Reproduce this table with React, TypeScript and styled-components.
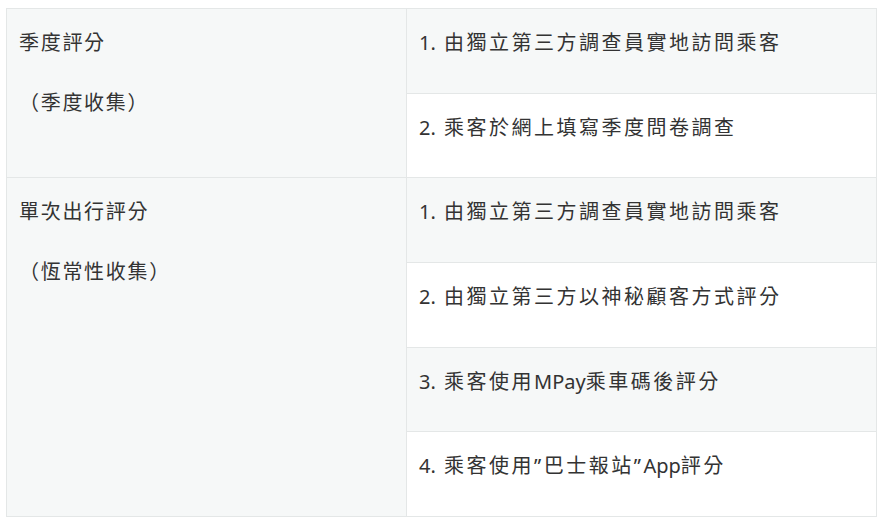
import type { FC } from "react"
import styled, { createGlobalStyle } from "styled-components"

const GlobalStyle = createGlobalStyle`
  body {
    margin: 0;
    background-color: rgb(255, 255, 255);
    font-family: "Noto Sans", "Noto Sans CJK TC", sans-serif;
    color: rgb(51, 51, 51);
  }
`

const Page = styled.div`
  padding: 8px 5px 0 6px;
`

const Table = styled.table`
  width: 870px;
  border-collapse: collapse;
  border: 1px solid rgb(228, 231, 231);
  table-layout: fixed;
`

const Row = styled.tr`
  height: 84.67px;
  &:nth-child(odd) > td {
    background-color: rgb(246, 248, 248);
  }
  &:nth-child(even) > td {
    background-color: rgb(255, 255, 255);
  }
`

const Cell = styled.td`
  border: 1px solid rgb(228, 231, 231);
  vertical-align: top;
  padding: 18px 12px 0 12px;
  font-size: 20px;
  line-height: 32px;
`

const Paragraph = styled.p`
  margin: 0 0 28px 0;
  white-space: nowrap;
`

// CJK runs get the wide tracking, latin runs stay tight
const Cjk = styled.span<{ $track: number }>`
  letter-spacing: ${(p) => p.$track}px;
`

const Latin = styled.span`
  word-spacing: 3px;
`

const CJK_RUN = /[\u3000-\u9fff\uff00-\uffef”]+|[^\u3000-\u9fff\uff00-\uffef”]+/g
const IS_CJK = /[\u3000-\u9fff\uff00-\uffef”]/

const Spaced: FC<{ text: string; track: number }> = ({ text, track }) => {
  const runs = text.match(CJK_RUN) ?? []
  return (
    <>
      {runs.map((r, i) =>
        IS_CJK.test(r) ? (
          <Cjk key={i} $track={track}>
            {r}
          </Cjk>
        ) : (
          <Latin key={i}>{r}</Latin>
        )
      )}
    </>
  )
}

type Group = { title: string; note: string; items: string[] }

const groups: Group[] = [
  {
    title: "季度評分",
    note: "（季度收集）",
    items: ["1. 由獨立第三方調查員實地訪問乘客", "2. 乘客於網上填寫季度問卷調查"],
  },
  {
    title: "單次出行評分",
    note: "（恆常性收集）",
    items: [
      "1. 由獨立第三方調查員實地訪問乘客",
      "2. 由獨立第三方以神秘顧客方式評分",
      "3. 乘客使用MPay乘車碼後評分",
      "4. 乘客使用”巴士報站”App評分",
    ],
  },
]

const App: FC = () => {
  return (
    <Page>
      <GlobalStyle />
      <Table>
        <colgroup>
          <col style={{ width: 400 }} />
          <col style={{ width: 470 }} />
        </colgroup>
        <tbody>
          {groups.flatMap((g) =>
            g.items.map((item, i) => (
              <Row key={g.title + i}>
                {i === 0 && (
                  <Cell rowSpan={g.items.length}>
                    <Paragraph>
                      <Spaced text={g.title} track={1.7} />
                    </Paragraph>
                    <Paragraph>
                      <Spaced text={g.note} track={1.7} />
                    </Paragraph>
                  </Cell>
                )}
                <Cell>
                  <Paragraph>
                    <Spaced text={item} track={2.5} />
                  </Paragraph>
                </Cell>
              </Row>
            ))
          )}
        </tbody>
      </Table>
    </Page>
  )
}

export default App
